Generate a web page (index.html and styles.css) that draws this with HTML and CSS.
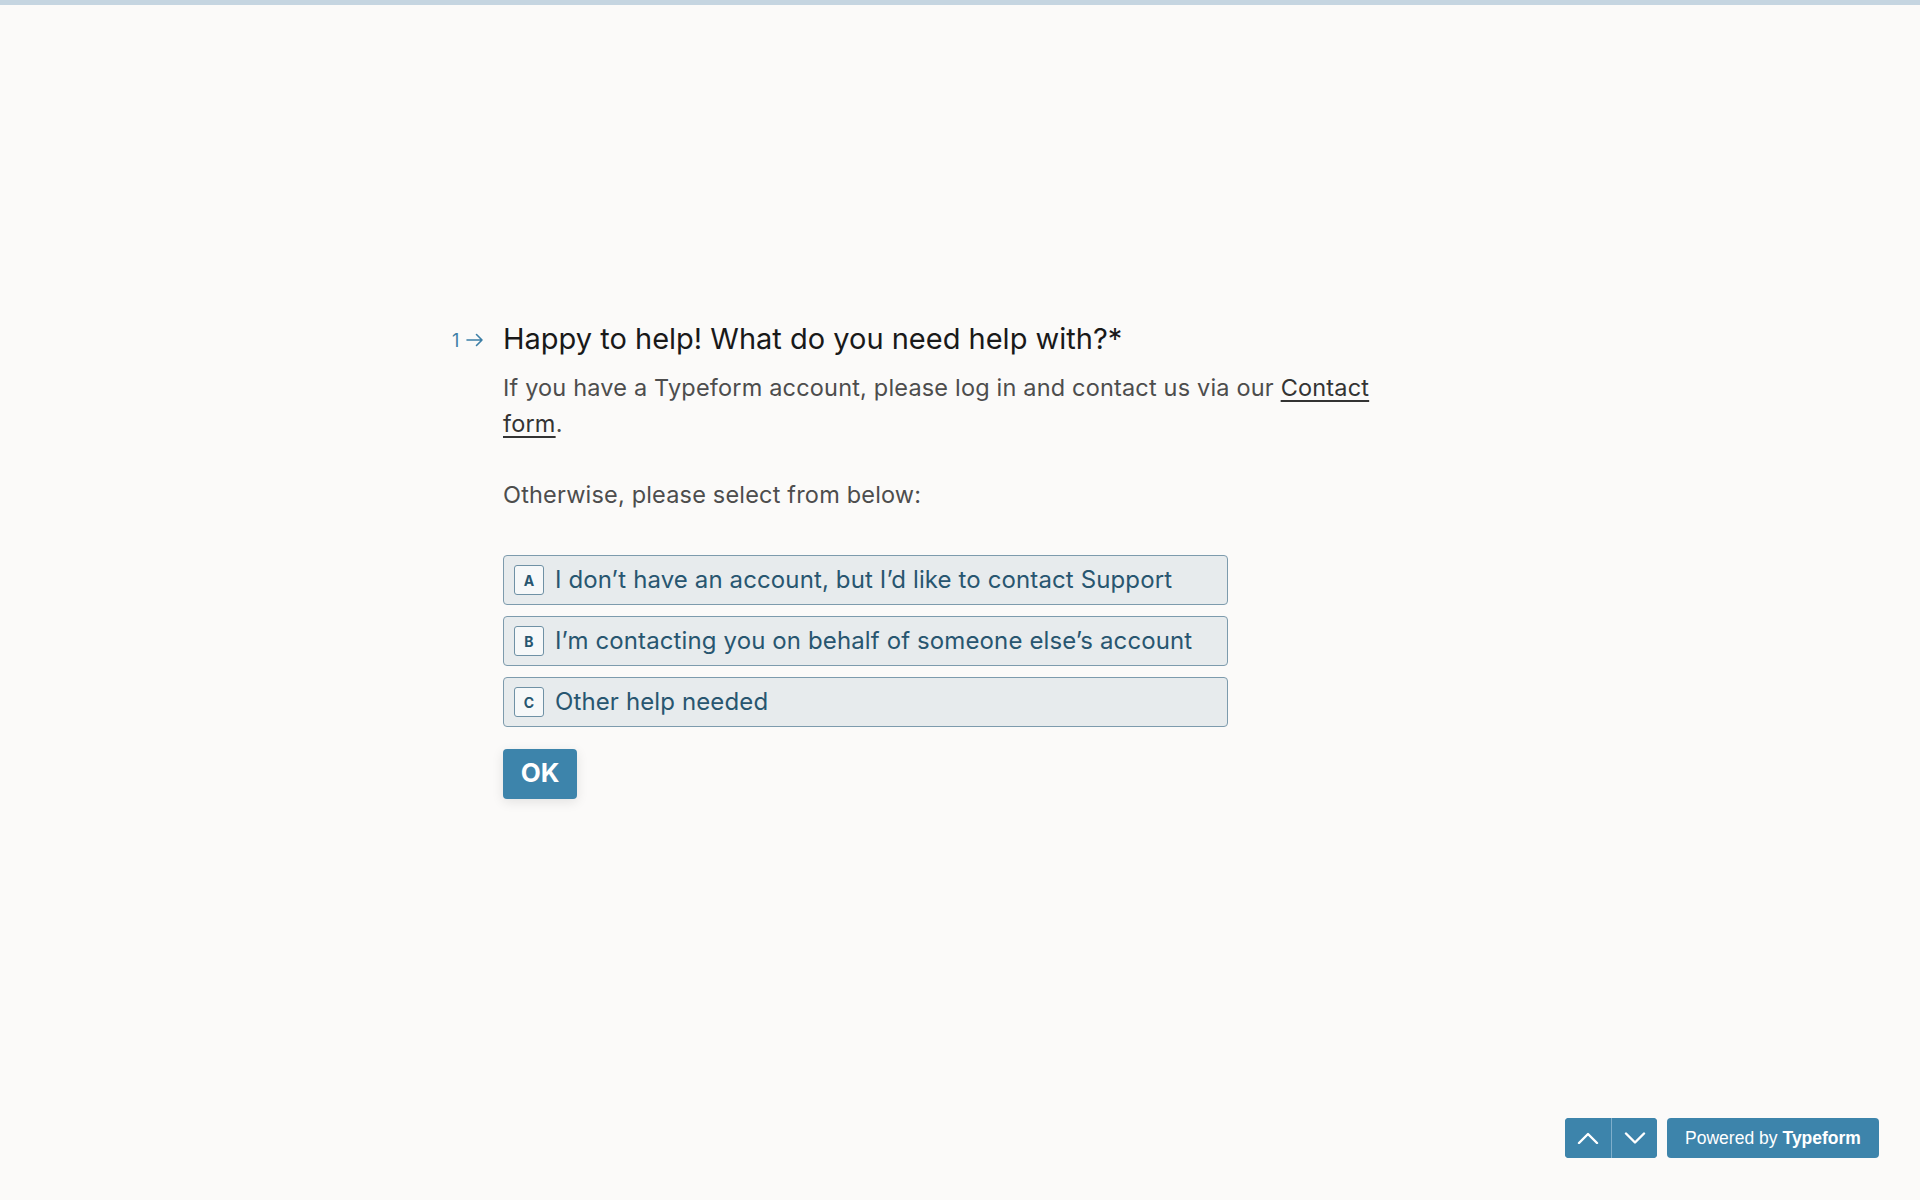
FILE: index.html
```html
<!DOCTYPE html>
<html lang="en">
<head>
<meta charset="utf-8">
<title>Typeform Support</title>
<link rel="stylesheet" href="styles.css">
</head>
<body>
<div class="progress"></div>
<main class="form">
  <section class="question">
    <div class="q-num">
      <span>1</span>
      <svg class="q-arrow" width="18" height="14" viewBox="0 0 18 14" aria-hidden="true">
        <path d="M1 7h15M10.5 1.5L16 7l-5.5 5.5" fill="none" stroke="currentColor" stroke-width="1.6" stroke-linecap="round" stroke-linejoin="round"/>
      </svg>
    </div>
    <div class="q-body">
      <h1 class="q-title">Happy to help! What do you need help with?*</h1>
      <div class="q-desc">
        <p>If you have a Typeform account, please log in and contact us via our <a href="#">Contact form</a>.</p>
        <p>Otherwise, please select from below:</p>
      </div>
      <ul class="choices">
        <li class="choice"><span class="key">A</span><span class="label">I don’t have an account, but I’d like to contact Support</span></li>
        <li class="choice"><span class="key">B</span><span class="label">I’m contacting you on behalf of someone else’s account</span></li>
        <li class="choice"><span class="key">C</span><span class="label">Other help needed</span></li>
      </ul>
      <button class="ok">OK</button>
    </div>
  </section>
</main>
<footer class="footer">
  <div class="nav">
    <button class="nav-btn" aria-label="Previous">
      <svg width="22" height="12" viewBox="0 0 22 12"><path d="M2 11L11 2l9 9" fill="none" stroke="#fff" stroke-width="2.4" stroke-linecap="round" stroke-linejoin="round"/></svg>
    </button>
    <button class="nav-btn" aria-label="Next">
      <svg width="22" height="12" viewBox="0 0 22 12"><path d="M2 1.5l9 9 9-9" fill="none" stroke="#fff" stroke-width="2.4" stroke-linecap="round" stroke-linejoin="round"/></svg>
    </button>
  </div>
  <a class="powered" href="#">Powered by <b>Typeform</b></a>
</footer>
</body>
</html>
```

FILE: styles.css
```css
* { box-sizing: border-box; }
html, body { margin: 0; padding: 0; }
body {
  background: #fbfaf9;
  font-family: Inter, Roboto, "Liberation Sans", Arial, sans-serif;
  height: 1200px;
  display: flex;
  flex-direction: column;
  overflow: hidden;
}
.progress {
  height: 5px;
  background: #c5d5e1;
  flex: none;
}
.form {
  flex: 1;
  padding-top: 314px;
}
.question {
  width: 1016px;
  margin: 0 auto;
  display: flex;
}
.q-num {
  width: 51px;
  flex: none;
  display: flex;
  align-items: center;
  gap: 7px;
  height: 40px;
  color: #3d7fa6;
  font-size: 18px;
  padding-top: 2px;
}
.q-arrow { display: block; }
.q-body { flex: 1; }
.q-title {
  margin: 0;
  font-size: 29px;
  line-height: 40px;
  font-weight: 400;
  color: #191919;
  letter-spacing: 0;
}
.q-desc {
  margin-top: 11px;
  max-width: 880px;
  color: #4d4d4d;
  font-size: 23.5px;
  line-height: 36px;
  letter-spacing: 0.18px;
}
.q-desc p { margin: 0; }
.q-desc p + p { margin-top: 35px; }
.q-desc a { color: #333; text-decoration: underline; text-underline-offset: 4px; }
.choices {
  list-style: none;
  margin: 42px 0 0;
  padding: 0;
  width: 725px;
  display: flex;
  flex-direction: column;
  gap: 11px;
}
.choice {
  height: 50px;
  display: flex;
  align-items: center;
  gap: 11px;
  padding: 0 10px 2px;
  background: #e7ebed;
  border: 1px solid #7d9bad;
  border-radius: 4px;
  color: #285670;
  font-size: 24px;
  letter-spacing: 0.12px;
}
.key {
  width: 30px;
  height: 30px;
  flex: none;
  display: flex;
  align-items: center;
  justify-content: center;
  background: #f6f8f9;
  border: 1px solid #6f91a5;
  border-radius: 3px;
  font-size: 14px;
  font-weight: 700;
  color: #285670;
  letter-spacing: 0;
  margin-top: 2px;
}
.ok {
  margin-top: 22px;
  width: 74px;
  height: 50px;
  border: none;
  border-radius: 4px;
  background: #3d84ab;
  color: #fff;
  font-family: inherit;
  font-size: 26px;
  font-weight: 700;
  box-shadow: 0 3px 12px rgba(0,0,0,0.1);
  padding: 0 0 4px;
}
.footer {
  flex: none;
  display: flex;
  justify-content: flex-end;
  gap: 10px;
  padding: 0 41px 42px 0;
}
.nav {
  display: flex;
  border-radius: 4px;
  overflow: hidden;
  background: #3d84ab;
}
.nav-btn {
  width: 46px;
  height: 40px;
  border: none;
  background: #3d84ab;
  display: flex;
  align-items: center;
  justify-content: center;
  padding: 0;
}
.nav-btn + .nav-btn { border-left: 1px solid #7eaecb; }
.powered {
  height: 40px;
  width: 212px;
  display: flex;
  align-items: center;
  justify-content: center;
  background: #3d84ab;
  border-radius: 4px;
  color: #fff;
  text-decoration: none;
  font-family: "Liberation Sans", Arial, sans-serif;
  font-size: 17.5px;
}
.powered b { margin-left: 5px; }
```
